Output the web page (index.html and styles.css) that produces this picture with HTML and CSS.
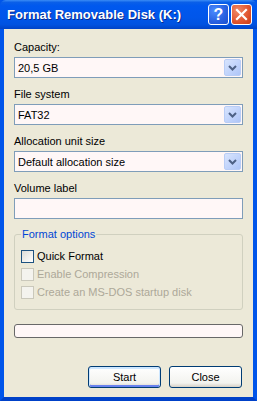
FILE: index.html
```html
<!DOCTYPE html>
<html lang="en">
<head>
    <meta charset="UTF-8">
    <title>Format Removable Disk (K:)</title>
    <link rel="stylesheet" href="styles.css">
</head>
<body>
    <div class="window">
        <div class="titlebar">
            <span class="title">Format Removable Disk (K:)</span>
            <div class="caption-btns">
                <span class="cap-btn help">?</span>
                <span class="cap-btn close">
                    <svg width="13" height="13" viewBox="0 0 13 13"><path d="M2 2 L11 11 M11 2 L2 11" stroke="#fff" stroke-width="2.2" stroke-linecap="square"/></svg>
                </span>
            </div>
        </div>

        <div class="frame">
            <div class="field">
                <div class="label">Capacity:</div>
                <div class="combo">
                    <span class="value">20,5 GB</span>
                    <span class="drop"><svg width="9" height="6" viewBox="0 0 9 6"><path d="M1 1 L4.5 4.5 L8 1" fill="none" stroke="#4d6185" stroke-width="2"/></svg></span>
                </div>
            </div>

            <div class="field">
                <div class="label">File system</div>
                <div class="combo">
                    <span class="value">FAT32</span>
                    <span class="drop"><svg width="9" height="6" viewBox="0 0 9 6"><path d="M1 1 L4.5 4.5 L8 1" fill="none" stroke="#4d6185" stroke-width="2"/></svg></span>
                </div>
            </div>

            <div class="field">
                <div class="label">Allocation unit size</div>
                <div class="combo">
                    <span class="value">Default allocation size</span>
                    <span class="drop"><svg width="9" height="6" viewBox="0 0 9 6"><path d="M1 1 L4.5 4.5 L8 1" fill="none" stroke="#4d6185" stroke-width="2"/></svg></span>
                </div>
            </div>

            <div class="field">
                <div class="label">Volume label</div>
                <div class="textbox"></div>
            </div>

            <fieldset class="options">
                <legend>Format options</legend>
                <div class="check"><span class="box"></span>Quick Format</div>
                <div class="check disabled"><span class="box"></span>Enable Compression</div>
                <div class="check disabled"><span class="box"></span>Create an MS-DOS startup disk</div>
            </fieldset>

            <div class="progress"></div>

            <div class="actions">
                <button class="btn default">Start</button>
                <button class="btn">Close</button>
            </div>
        </div>
    </div>
</body>
</html>
```

FILE: styles.css
```css
* {
    margin: 0;
    padding: 0;
    box-sizing: border-box;
}

body {
    font-family: "Liberation Sans", Arial, sans-serif;
    font-size: 11px;
    color: #000;
    background: #0055ea;
}

.window {
    width: 257px;
    height: 401px;
    display: flex;
    flex-direction: column;
}

/* title bar */
.titlebar {
    height: 29px;
    flex: none;
    display: flex;
    align-items: center;
    padding: 0 5px 0 7px;
    background: linear-gradient(to bottom, #3b8cf5 0%, #0a5fe8 8%, #0058ee 20%, #0056ea 60%, #0052e0 85%, #0043c6 100%);
    border-radius: 6px 6px 0 0;
}

.title {
    flex: 1;
    color: #fff;
    font-weight: bold;
    font-size: 13px;
    text-shadow: 1px 1px 0 #0c2a8a;
    white-space: nowrap;
}

.caption-btns {
    display: flex;
    gap: 2px;
}

.cap-btn {
    width: 21px;
    height: 21px;
    border: 1px solid #fff;
    border-radius: 3px;
    display: flex;
    align-items: center;
    justify-content: center;
    color: #fff;
}

.help {
    background: radial-gradient(circle at 30% 30%, #4c8cff, #2860e0 60%, #1a4fd0);
    font-weight: bold;
    font-size: 16px;
}

.close {
    background: radial-gradient(circle at 30% 30%, #f08a68, #e0542e 60%, #c83c18);
}

/* frame + content */
.frame {
    flex: 1;
    background: #ece9d8;
    border: 4px solid #0055ea;
    border-top: none;
    border-bottom-color: #0041c8;
    padding: 12px 10px 0 10px;
    display: flex;
    flex-direction: column;
}

.field {
    margin-bottom: 10px;
}

.label {
    line-height: 13px;
    margin-bottom: 3px;
}

.combo,
.textbox {
    height: 21px;
    border: 1px solid #7f9db9;
    background: #fff7f7;
}

.combo {
    display: flex;
    align-items: center;
    padding: 1px 1px 1px 3px;
}

.combo .value {
    flex: 1;
}

.drop {
    width: 17px;
    height: 17px;
    border-radius: 2px;
    border: 1px solid #b9cdf6;
    background: linear-gradient(135deg, #d8e4fd, #bfd2fb 60%, #aec5f7);
    display: flex;
    align-items: center;
    justify-content: center;
}

.options {
    margin-top: -1px;
    border: 1px solid #d0d0bf;
    border-radius: 3px;
    padding: 6px 6px 8px 6px;
}

.options legend {
    color: #0046d5;
    padding: 0 1px;
    line-height: 13px;
}

.check {
    display: flex;
    align-items: center;
    height: 18px;
    gap: 3px;
}

.box {
    width: 13px;
    height: 13px;
    border: 1px solid #1c5180;
    background: linear-gradient(135deg, #dcdcd7, #fff);
}

.check.disabled {
    color: #aca899;
}

.check.disabled .box {
    border-color: #cac8bb;
    background: #f4f3ee;
}

.progress {
    margin-top: 14px;
    height: 14px;
    border: 1px solid #686868;
    border-radius: 3px;
    background: #fff7f7;
}

.actions {
    margin-top: 28px;
    display: flex;
    justify-content: flex-end;
    gap: 8px;
    padding-right: 1px;
}

.btn {
    width: 73px;
    height: 22px;
    font-family: inherit;
    font-size: 11px;
    border: 1px solid #003c74;
    border-radius: 3px;
    background: linear-gradient(to bottom, #ffffff, #f3f3ef 80%, #d6d0c5);
}

.btn.default {
    box-shadow: inset 0 1px 0 1px #cee7ff, inset 0 -1px 0 1px #6982ee;
}
```
